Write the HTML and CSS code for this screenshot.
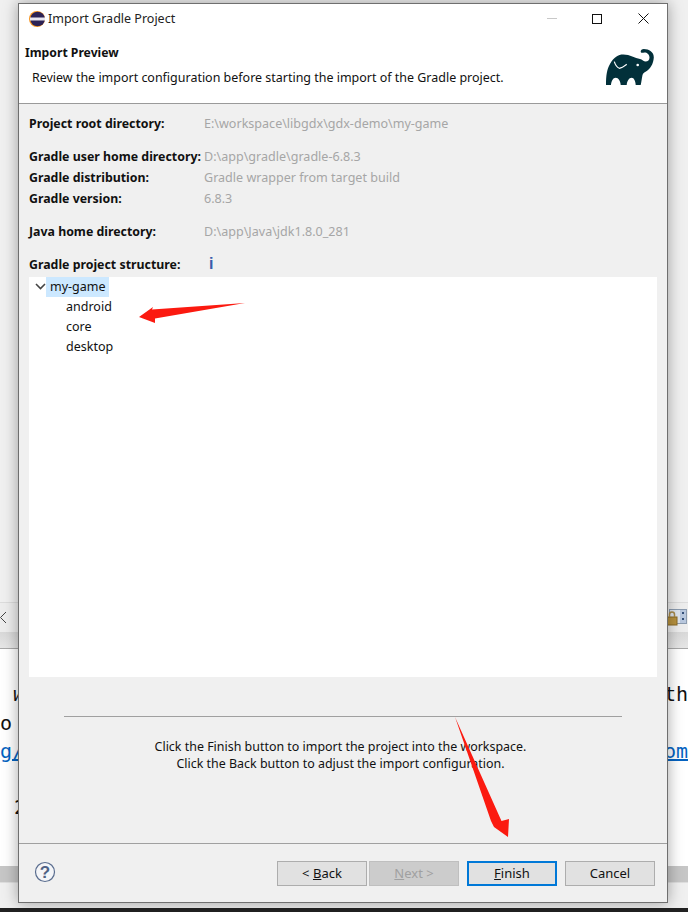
FILE: index.html
```html
<!DOCTYPE html>
<html lang="en">
<head>
<meta charset="utf-8">
<title>Import Gradle Project</title>
<link rel="stylesheet" href="styles.css">
</head>
<body>
<div class="desktop">
  <div class="backdrop">
    <div class="bd-top"></div>
    <div class="bd-toolbar">
      <svg class="bd-back" width="8" height="14" viewBox="0 0 8 14"><path d="M6 1 L0.500 6.500 L6 12" fill="none" stroke="#444" stroke-width="1"/></svg>
      <svg class="bd-lock" width="22" height="20" viewBox="0 0 22 20">
        <rect x="3.500" y="1.500" width="17" height="14" fill="#dfe6ee" stroke="#8c9cb0"/>
        <rect x="14" y="2" width="6" height="13" fill="#b9c8de"/>
        <rect x="16" y="4" width="2" height="2" fill="#34507a"/>
        <rect x="16" y="10" width="2" height="2" fill="#34507a"/>
        <rect x="1" y="9" width="10" height="8" fill="#b8923f" stroke="#8a6a26" stroke-width="1"/>
        <path d="M3.500 9 V6.500 a2.500 2.500 0 0 1 5 0 V9" fill="none" stroke="#a88a4a" stroke-width="1.500"/>
      </svg>
    </div>
    <div class="bd-band"></div>
    <div class="bd-doc">
      <div class="bd-line bd-l1"><span class="bd-it">w</span><span>th</span></div>
      <div class="bd-line bd-l2"><span>o</span></div>
      <div class="bd-line bd-l3"><a class="bd-link">g/</a><a class="bd-link">om</a></div>
      <div class="bd-line bd-l4"><span class="bd-two">2</span></div>
    </div>
    <div class="bd-scroll"></div>
    <div class="bd-status"></div>
    <div class="bd-task"></div>
  </div>

  <div class="dialog">
    <div class="titlebar">
      <svg class="eclipse" width="16" height="16" viewBox="0 0 16 16">
        <circle cx="8" cy="8" r="8" fill="#f7941e"/>
        <circle cx="8.600" cy="8" r="7.300" fill="#2c2255"/>
        <rect x="1" y="6.500" width="15" height="3" fill="#e8e6f0"/>
      </svg>
      <span class="title">Import Gradle Project</span>
      <div class="winctrls">
        <span class="ctl ctl-min"></span>
        <span class="ctl ctl-max"></span>
        <svg class="ctl-close" width="11" height="11" viewBox="0 0 11 11"><path d="M0.500 0.500 L10.500 10.500 M10.500 0.500 L0.500 10.500" stroke="#111" stroke-width="1"/></svg>
      </div>
    </div>
    <div class="header">
      <div class="header-text">
        <div class="h-title">Import Preview</div>
        <div class="h-desc">Review the import configuration before starting the import of the Gradle project.</div>
      </div>
      <svg class="gradle" width="48" height="36" viewBox="0 0 48 36">
        <path fill="#02303a" d="M0 36 C0 26 1 20 4 15 C8 8 12 5.500 17.300 5.500 C24 5.500 29 9 34 10 C36 10.500 38 12.500 39.500 12.500 C42 12.500 43.500 11 43.500 8.500 C43.500 5.500 41 3.500 38.500 3.500 C37 3.500 35.500 4.500 34.700 3 C34.500 1 36 0 37.800 0 C43 0 48 3 47.800 8.500 C47.500 15 44 20 40 22.500 C38 23.500 37 24.500 36.500 26 C35.800 29 35.500 33 34.700 36 L29.700 36 C29.500 32 28 28.700 25.700 28.700 C23 28.700 21 32 20.700 36 L14.700 36 C14.500 32 12.500 28.700 9.700 28.700 C7 28.700 5.300 32 5 36 Z"/>
        <path fill="none" stroke="#fff" stroke-width="1.200" d="M8.300 12.700 C9 15 11 18.500 13.300 19.300 C16 19 18.500 17 20.700 15.300"/>
        <circle cx="31.700" cy="16" r="1.300" fill="#fff"/>
      </svg>
    </div>
    <div class="content">
      <div class="inforow"><span class="lbl">Project root directory:</span><span class="val">E:\workspace\libgdx\gdx-demo\my-game</span></div>
      <div class="group">
        <div class="inforow"><span class="lbl">Gradle user home directory:</span><span class="val">D:\app\gradle\gradle-6.8.3</span></div>
        <div class="inforow"><span class="lbl">Gradle distribution:</span><span class="val">Gradle wrapper from target build</span></div>
        <div class="inforow"><span class="lbl">Gradle version:</span><span class="val">6.8.3</span></div>
      </div>
      <div class="inforow"><span class="lbl">Java home directory:</span><span class="val">D:\app\Java\jdk1.8.0_281</span></div>
      <div class="inforow struct"><span class="lbl">Gradle project structure:</span><span class="info">i</span></div>
      <div class="tree">
        <div class="tree-row root">
          <svg class="chev" width="11" height="7" viewBox="0 0 11 7"><path d="M1 1 L5.500 5.500 L10 1" fill="none" stroke="#444" stroke-width="1.600"/></svg>
          <span class="sel">my-game</span>
        </div>
        <div class="tree-row child">android</div>
        <div class="tree-row child">core</div>
        <div class="tree-row child">desktop</div>
      </div>
      <div class="sep"></div>
      <div class="msg">
        <div>Click the Finish button to import the project into the workspace.</div>
        <div>Click the Back button to adjust the import configuration.</div>
      </div>
    </div>
    <div class="footer">
      <svg class="help" width="22" height="22" viewBox="0 0 22 22">
        <circle cx="11" cy="11" r="9.500" fill="#f4f5f8" stroke="#5a6d8f" stroke-width="1.200"/>
        <text x="11" y="17" text-anchor="middle" class="help-q">?</text>
      </svg>
      <div class="buttons">
        <div class="btn-pair">
          <button class="btn">&lt; <u>B</u>ack</button>
          <button class="btn btn-off"><u>N</u>ext &gt;</button>
        </div>
        <button class="btn btn-def"><u>F</u>inish</button>
        <button class="btn">Cancel</button>
      </div>
    </div>
  </div>

  <svg class="arrows" width="688" height="912" viewBox="0 0 688 912">
    <polygon fill="#fb1a10" points="245,303 155,318.500 155,323 139,317 153,307 152,309.500"/>
    <polygon fill="#fb1a10" points="455,717 501.500,821 509,819 508,837 494,827 491,821"/>
  </svg>
</div>
</body>
</html>
```
FILE: styles.css
```css
* { box-sizing: border-box; }
html, body { margin: 0; padding: 0; }
body { width: 688px; height: 912px; overflow: hidden; background: #f0f0f0; }
.desktop { position: relative; width: 688px; height: 912px; overflow: hidden; font-family: "Noto Sans", sans-serif; font-size: 12.500px; color: #111; }

.backdrop { position: absolute; inset: 0; display: flex; flex-direction: column; }
.bd-top { height: 603px; background: #f0f0f0; border-bottom: 1px solid #dcdcdc; }
.bd-toolbar { height: 29px; background: #ededed; display: flex; align-items: center; justify-content: space-between; }
.bd-lock { margin-left: auto; }
.bd-band { height: 17px; background: linear-gradient(#d8d8d8, #e6e6e6); border-bottom: 1px solid #a8a8a8; }
.bd-doc { height: 217px; background: #fff; font-family: "DejaVu Sans Mono", monospace; font-size: 20px; color: #111; }
.bd-line { display: flex; justify-content: space-between; height: 28.500px; line-height: 28.500px; }
.bd-l1 { margin-top: 31px; padding-left: 13px; }
.bd-l3 a { color: #0563c1; text-decoration: underline; }
.bd-l4 { margin-top: 27px; padding-left: 14px; }
.bd-it { font-style: italic; }
.bd-scroll { height: 16px; background: #c6c6c6; }
.bd-status { height: 26px; background: #f0f0f0; border-top: 1px solid #dedede; }
.bd-task { flex: 1; background: #222; }

.dialog { position: absolute; left: 18px; top: 3px; width: 650px; height: 900px; display: flex; flex-direction: column; background: #f0f0f0; border: 1px solid #6f6f6f; box-shadow: 0 0 14px rgba(0,0,0,.35); }

.titlebar { height: 30px; background: #fff; display: flex; align-items: center; padding-left: 10px; flex: none; }
.eclipse { flex: none; margin-top: -1px; }
.title { margin-left: 3px; color: #222; margin-top: -2px; font-size: 12.500px; }
.winctrls { margin-left: auto; display: flex; align-items: center; padding-right: 18px; margin-top: -1px; }
.ctl-min { display: block; width: 10px; height: 1px; background: #c8c8c8; margin-right: 35px; }
.ctl-max { display: block; width: 10px; height: 10px; border: 1px solid #111; margin-right: 36px; }
.ctl-close { display: block; }

.header { height: 70px; flex: none; background: #fff; border-bottom: 1px solid #9a9a9a; display: flex; justify-content: space-between; padding: 10px 13px 0 6px; }
.h-title { font-weight: 700; font-size: 12.200px; line-height: 18px; color: #111; }
.h-desc { margin-top: 7px; margin-left: 7px; line-height: 18px; color: #111; font-size: 12.480px; }
.gradle { flex: none; margin-top: 5px; }

.content { flex: 1; display: flex; flex-direction: column; padding: 9px 10px 0 10px; }
.group { margin: 12px 0; }
.inforow { display: flex; height: 21px; align-items: center; }
.lbl { width: 175px; flex: none; font-weight: 700; font-size: 12.350px; color: #111; white-space: nowrap; }
.val { color: #a6a6a6; white-space: nowrap; font-size: 12.550px; margin-top: -1px; }
.struct { margin-top: 12px; }
.info { font-family: "Liberation Sans", sans-serif; font-weight: 700; font-size: 16px; color: #3a5cab; margin-left: 5px; line-height: 21px; margin-top: -2px; }

.tree { height: 400px; margin-top: 2px; background: #fff; flex: none; }
.tree-row { height: 20px; display: flex; align-items: center; color: #111; }
.root { padding-left: 6px; }
.chev { flex: none; margin-top: -1px; }
.sel { background: #cce8ff; height: 20px; line-height: 19px; padding: 0 4px; width: 63px; white-space: nowrap; }
.child { padding-left: 37px; padding-bottom: 1px; }

.sep { height: 1px; margin: 39px 35px 0 35px; background: #a0a0a0; flex: none; }
.msg { margin-top: 21px; padding-right: 5px; text-align: center; line-height: 17px; color: #111; font-size: 12.450px; }

.footer { height: 59px; flex: none; border-top: 1px solid #a0a0a0; display: flex; align-items: flex-start; justify-content: space-between; padding: 17px 12px 0 15px; }
.help { flex: none; }
.help-q { font-family: "Liberation Sans", sans-serif; font-weight: 700; font-size: 17px; fill: #4f6285; }
.buttons { display: flex; gap: 8px; }
.btn-pair { display: flex; gap: 2px; }
.btn { width: 90px; height: 25px; padding: 0; background: #e1e1e1; border: 1px solid #adadad; font-family: "Noto Sans", sans-serif; font-size: 13px; color: #111; line-height: 1; }
.btn-off { background: #cccccc; border-color: #bfbfbf; color: #a0a0a0; }
.btn-def { border: 2px solid #0078d7; }

.arrows { position: absolute; left: 0; top: 0; pointer-events: none; }
```
